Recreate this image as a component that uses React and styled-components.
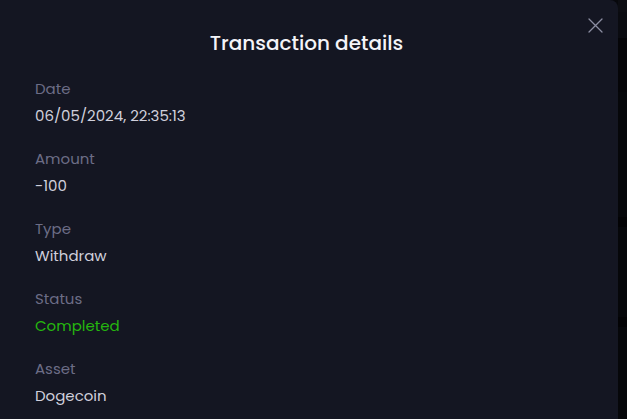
import React from "react";
import styled, { createGlobalStyle } from "styled-components";

const Global = createGlobalStyle`
  html, body { margin: 0; padding: 0; background: #08090d; }
  body { font-family: "Poppins", Inter, "Noto Sans", sans-serif; }
`;

const Page = styled.div`
  display: flex;
  width: 627px;
  height: 419px;
  overflow: hidden;
  background: #07080c;
`;

const Panel = styled.div`
  position: relative;
  width: 618px;
  height: 419px;
  flex: none;
  background: #141622;
  border-radius: 0 8px 0 0;
  box-sizing: border-box;
  padding: 30px 40px 0 35px;
`;

const Backdrop = styled.div`
  flex: 1;
  display: flex;
  flex-direction: column;
`;

const Shade = styled.div`
  height: ${(p) => p.h}px;
  background: ${(p) => p.c};
`;

const Title = styled.h2`
  margin: 0 0 22px 0;
  text-align: center;
  font-size: 20px;
  font-weight: 500;
  color: #f4f4f8;
  line-height: 26px;
`;

const Close = styled.button`
  position: absolute;
  top: 17px;
  right: 15px;
  width: 16px;
  height: 16px;
  padding: 0;
  border: none;
  background: transparent;
  display: flex;
  align-items: center;
  justify-content: center;
`;

const List = styled.dl`
  margin: 0;
  display: flex;
  flex-direction: column;
  gap: 21px;
`;

const Field = styled.div`
  display: flex;
  flex-direction: column;
  gap: 5px;
`;

const Label = styled.dt`
  margin: 0;
  font-size: 15px;
  line-height: 22px;
  color: #6c6d86;
`;

const Value = styled.dd`
  margin: 0;
  font-size: 15px;
  line-height: 22px;
  color: ${(p) => p.color || "#d0d0dc"};
`;

const rows = [
  ["Date", "06/05/2024, 22:35:13"],
  ["Amount", "-100"],
  ["Type", "Withdraw"],
  ["Status", "Completed", "#25b60f"],
  ["Asset", "Dogecoin"],
];

export default function App() {
  return (
    <Page>
      <Global />
      <Panel>
        <Close aria-label="Close">
          <svg width="15" height="15" viewBox="0 0 15 15">
            <path d="M1 1L14 14M14 1L1 14" stroke="#8b8da1" strokeWidth="1.3" strokeLinecap="round" />
          </svg>
        </Close>
        <Title>Transaction details</Title>
        <List>
          {rows.map(([l, v, c]) => (
            <Field key={l}>
              <Label>{l}</Label>
              <Value color={c}>{v}</Value>
            </Field>
          ))}
        </List>
      </Panel>
      <Backdrop>
        <Shade h={12} c="#0c0d12" />
        <Shade h={26} c="#0a0b10" />
        <Shade h={54} c="#050508" />
        <Shade h={125} c="#06070a" />
        <Shade h={10} c="#030305" />
        <Shade h={90} c="#06070a" />
        <Shade h={10} c="#030305" />
        <Shade h={92} c="#06070a" />
      </Backdrop>
    </Page>
  );
}
